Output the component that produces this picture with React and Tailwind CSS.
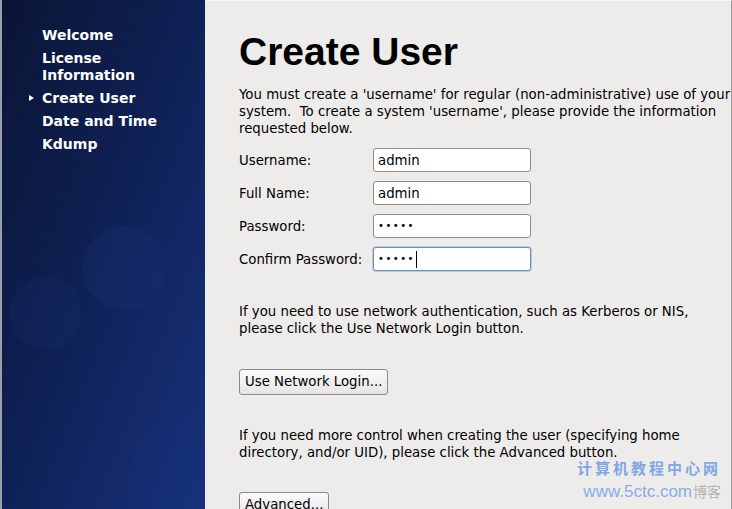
const STEPS = [
  { label: ['Welcome'] },
  { label: ['License', 'Information'] },
  { label: ['Create User'], active: true },
  { label: ['Date and Time'] },
  { label: ['Kdump'] },
]

const FIELDS = [
  { label: 'Username:', value: 'admin' },
  { label: 'Full Name:', value: 'admin' },
  { label: 'Password:', value: '•••••', secret: true },
  { label: 'Confirm Password:', value: '•••••', secret: true, focus: true },
]

function Sidebar() {
  return (
    <aside className="relative w-[205px] shrink-0 h-full overflow-hidden border-l-2 border-[#9aa0ab]
      bg-linear-to-br from-[#0a1434] via-[#0f2257] to-[#17317c]">
      {/* faint bubbles from the artwork */}
      <div className="absolute left-[80px] top-[226px] w-[84px] h-[84px] rounded-full bg-[#1b3378]/25" />
      <div className="absolute left-[8px] top-[276px] w-[72px] h-[74px] rounded-full bg-[#1a3275]/20" />
      <div className="absolute left-[130px] top-[420px] w-[90px] h-[90px] rounded-full bg-[#1d3782]/15" />

      <nav className="relative pt-[27px] pl-[40px] flex flex-col gap-[6px]
        font-['DejaVu_Sans',sans-serif] text-[14px] leading-[17px] font-bold text-white">
        {STEPS.map(s => (
          <div key={s.label[0]} className="relative">
            {s.active && (
              <span className="absolute left-[-13px] top-[5px] w-0 h-0 border-y-[3.5px] border-y-transparent border-l-[5px] border-l-white" />
            )}
            {s.label.map(l => <div key={l}>{l}</div>)}
          </div>
        ))}
      </nav>
    </aside>
  )
}

function Field({ f }) {
  return (
    <div className="flex items-center h-[24px]">
      <span className="w-[134px]">{f.label}</span>
      <div className={
        'w-[158px] h-[24px] rounded-[3px] bg-white flex items-center px-[4px] ' +
        (f.focus
          ? 'border border-[#6f8fbf] shadow-[0_0_0_1px_#b9cce6]'
          : 'border border-[#8c8c8c]')
      }>
        <span className={f.secret ? 'text-[10px] tracking-[1.5px] leading-none' : ''}>{f.value}</span>
        {f.focus && <span className="w-px h-[17px] bg-black ml-[1px]" />}
      </div>
    </div>
  )
}

function Btn({ children }) {
  return (
    <button className="h-[26px] px-[5px] rounded-[3px] border border-[#8a8a8a]
      bg-linear-to-b from-[#fbfbfb] to-[#e6e5e3] text-[13.3px] leading-none text-black">
      {children}
    </button>
  )
}

export default function App() {
  return (
    <div className="w-[732px] h-[509px] flex overflow-hidden bg-[#edeceb]">
      <Sidebar />

      <main className="relative flex-1 h-full overflow-hidden border-t border-[#f7f7f6] border-r border-r-[#9c9c9c]
        pl-[34px] font-['DejaVu_Sans',sans-serif] text-[13.3px] leading-[17px] text-black">
        <h1 className="mt-[29px] font-['Liberation_Sans',Arial,sans-serif] font-bold text-[39px] leading-[44px]">
          Create User
        </h1>

        <p className="mt-[12px] whitespace-nowrap">
          You must create a 'username' for regular (non-administrative) use of your<br />
          system.&nbsp; To create a system 'username', please provide the information<br />
          requested below.
        </p>

        <div className="mt-[11px] flex flex-col gap-[9px]">
          {FIELDS.map(f => <Field key={f.label} f={f} />)}
        </div>

        <p className="mt-[32px] whitespace-nowrap">
          If you need to use network authentication, such as Kerberos or NIS,<br />
          please click the Use Network Login button.
        </p>

        <div className="mt-[32px]">
          <Btn>Use Network Login...</Btn>
        </div>

        <p className="mt-[32px] whitespace-nowrap">
          If you need more control when creating the user (specifying home<br />
          directory, and/or UID), please click the Advanced button.
        </p>

        <div className="mt-[31px]">
          <Btn>Advanced...</Btn>
        </div>

        {/* watermark */}
        <div className="absolute right-[10px] bottom-[9px] flex flex-col items-end gap-[8px] pointer-events-none whitespace-nowrap">
          <span className="font-['Noto_Sans_CJK_SC',sans-serif] font-bold text-[15px] tracking-[3px] leading-none text-[#7fa6e8]">
            计算机教程中心网
          </span>
          <span className="flex items-baseline gap-[1px] leading-none">
            <span className="font-['Liberation_Sans',sans-serif] text-[17px] text-[#86aee9]">www.5ctc.com</span>
            <span className="font-['Noto_Sans_CJK_SC',sans-serif] text-[14px] text-[#b3b3b3]">博客</span>
          </span>
        </div>
      </main>
    </div>
  )
}
